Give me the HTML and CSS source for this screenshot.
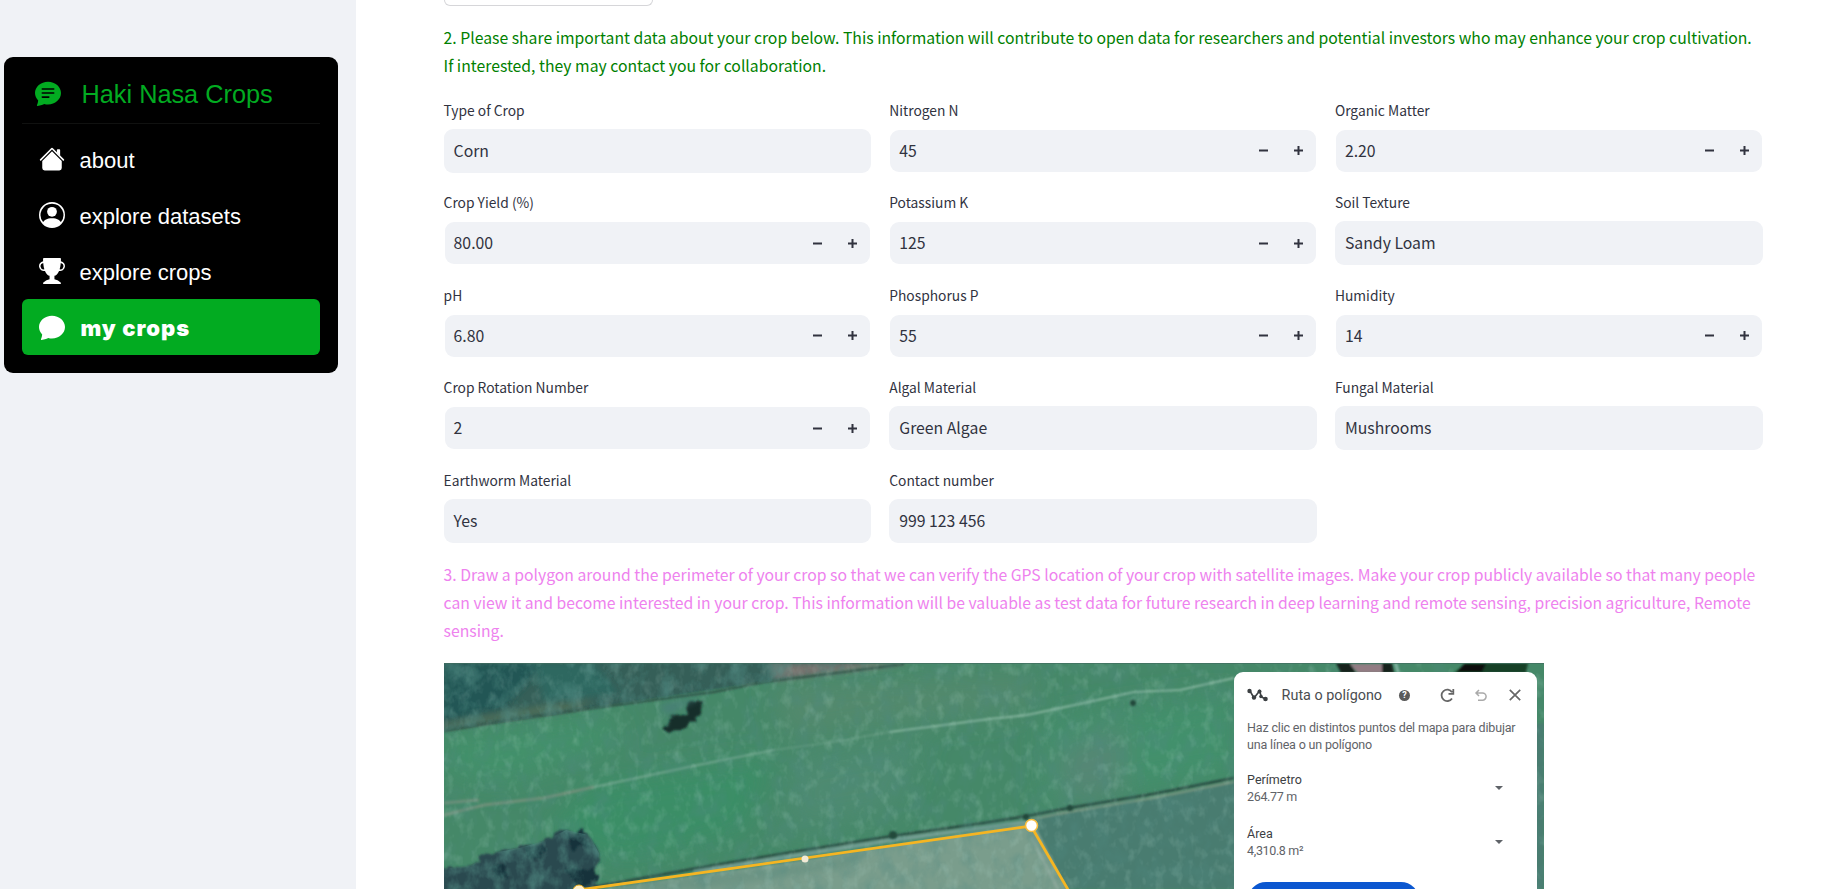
FILE: index.html
```html
<!DOCTYPE html>
<html lang="en">
<head>
<meta charset="utf-8">
<title>Haki Nasa Crops</title>
<link rel="stylesheet" href="styles.css">
</head>
<body>
<svg class="defs" width="0" height="0">
  <symbol id="minus" viewBox="0 0 9 9"><path d="M0 3.5h9v2H0z"/></symbol>
  <symbol id="plus" viewBox="0 0 9 9"><path d="M0 3.5h3.5V0h2v3.5H9v2H5.5V9h-2V5.5H0z"/></symbol>
</svg>
<div class="app">
  <aside class="sidebar">
    <nav class="menu">
      <div class="menu-title">
        <svg class="icon" viewBox="0 0 16 16"><path d="M16 8c0 3.866-3.582 7-8 7a9.06 9.06 0 0 1-2.347-.306c-.584.296-1.925.864-4.181 1.234-.2.032-.352-.176-.273-.362.354-.836.674-1.95.77-2.966C.744 11.37 0 9.76 0 8c0-3.866 3.582-7 8-7s8 3.134 8 7zM4.5 5a.5.5 0 0 0 0 1h7a.5.5 0 0 0 0-1h-7zm0 2.5a.5.5 0 0 0 0 1h7a.5.5 0 0 0 0-1h-7zm0 2.5a.5.5 0 0 0 0 1h4a.5.5 0 0 0 0-1h-4z"/></svg>
        <span>Haki Nasa Crops</span>
      </div>
      <a class="menu-item">
        <svg class="icon" viewBox="0 0 16 16"><path d="M8 3.293l6 6V13.5a1.5 1.5 0 0 1-1.5 1.5h-9A1.5 1.5 0 0 1 2 13.5V9.293l6-6zm5-.793V6l-2-2V2.5a.5.5 0 0 1 .5-.5h1a.5.5 0 0 1 .5.5z"/><path d="M7.293 1.5a1 1 0 0 1 1.414 0l6.647 6.646a.5.5 0 0 1-.708.708L8 2.207 1.354 8.854a.5.5 0 1 1-.708-.708L7.293 1.5z"/></svg>
        <span>about</span>
      </a>
      <a class="menu-item">
        <svg class="icon" viewBox="0 0 16 16"><path d="M11 6a3 3 0 1 1-6 0 3 3 0 0 1 6 0z"/><path fill-rule="evenodd" d="M0 8a8 8 0 1 1 16 0A8 8 0 0 1 0 8zm8-7a7 7 0 0 0-5.468 11.37C3.242 11.226 4.805 10 8 10s4.757 1.225 5.468 2.37A7 7 0 0 0 8 1z"/></svg>
        <span>explore datasets</span>
      </a>
      <a class="menu-item">
        <svg class="icon" viewBox="0 0 16 16"><path d="M2.5.5A.5.5 0 0 1 3 0h10a.5.5 0 0 1 .5.5c0 .538-.012 1.05-.034 1.536a3 3 0 1 1-1.133 5.89c-.79 1.865-1.878 2.777-2.833 3.011v2.173l1.425.356c.194.048.377.135.537.255L13.3 15.1a.5.5 0 0 1-.3.9H3a.5.5 0 0 1-.3-.9l1.838-1.379c.16-.12.343-.207.537-.255L6.5 13.11v-2.173c-.955-.234-2.043-1.146-2.833-3.012a3 3 0 1 1-1.132-5.89A33.076 33.076 0 0 1 2.5.5zm.099 2.54a2 2 0 0 0 .72 3.935c-.333-1.05-.588-2.346-.72-3.935zm10.083 3.935a2 2 0 0 0 .72-3.935c-.133 1.59-.388 2.885-.72 3.935z"/></svg>
        <span>explore crops</span>
      </a>
      <a class="menu-item active">
        <svg class="icon" viewBox="0 0 16 16"><path d="M8 15c4.418 0 8-3.134 8-7s-3.582-7-8-7-8 3.134-8 7c0 1.76.743 3.37 1.97 4.6-.097 1.016-.417 2.13-.771 2.966-.079.186.074.394.273.362 2.256-.37 3.597-.938 4.18-1.234A9.06 9.06 0 0 0 8 15z"/></svg>
        <span>my crops</span>
      </a>
    </nav>
  </aside>
  <main class="content">
    <div class="upper-button"></div>
    <p class="step step-data">2. Please share important data about your crop below. This information will contribute to open data for researchers and potential investors who may enhance your crop cultivation.<br>If interested, they may contact you for collaboration.</p>
    <form class="fields">
      <div class="field"><label>Type of Crop</label><div class="input tall">Corn</div></div>
      <div class="field"><label>Nitrogen N</label><div class="input number"><span>45</span><svg><use href="#minus"/></svg><svg><use href="#plus"/></svg></div></div>
      <div class="field"><label>Organic Matter</label><div class="input number"><span>2.20</span><svg><use href="#minus"/></svg><svg><use href="#plus"/></svg></div></div>
      <div class="field"><label>Crop Yield (%)</label><div class="input number"><span>80.00</span><svg><use href="#minus"/></svg><svg><use href="#plus"/></svg></div></div>
      <div class="field"><label>Potassium K</label><div class="input number"><span>125</span><svg><use href="#minus"/></svg><svg><use href="#plus"/></svg></div></div>
      <div class="field"><label>Soil Texture</label><div class="input">Sandy Loam</div></div>
      <div class="field"><label>pH</label><div class="input number"><span>6.80</span><svg><use href="#minus"/></svg><svg><use href="#plus"/></svg></div></div>
      <div class="field"><label>Phosphorus P</label><div class="input number"><span>55</span><svg><use href="#minus"/></svg><svg><use href="#plus"/></svg></div></div>
      <div class="field"><label>Humidity</label><div class="input number"><span>14</span><svg><use href="#minus"/></svg><svg><use href="#plus"/></svg></div></div>
      <div class="field"><label>Crop Rotation Number</label><div class="input number"><span>2</span><svg><use href="#minus"/></svg><svg><use href="#plus"/></svg></div></div>
      <div class="field"><label>Algal Material</label><div class="input">Green Algae</div></div>
      <div class="field"><label>Fungal Material</label><div class="input">Mushrooms</div></div>
      <div class="field"><label>Earthworm Material</label><div class="input">Yes</div></div>
      <div class="field"><label>Contact number</label><div class="input">999 123 456</div></div>
    </form>
    <p class="step step-map">3. Draw a polygon around the perimeter of your crop so that we can verify the GPS location of your crop with satellite images. Make your crop publicly available so that many people<br>can view it and become interested in your crop. This information will be valuable as test data for future research in deep learning and remote sensing, precision agriculture, Remote<br>sensing.</p>
    <div class="map">
      <svg class="terrain" viewBox="0 0 1100 226">
        <defs>
          <filter id="b1" x="-20%" y="-20%" width="140%" height="140%"><feGaussianBlur stdDeviation="1"/></filter>
          <filter id="b3" x="-30%" y="-30%" width="160%" height="160%"><feGaussianBlur stdDeviation="3"/></filter>
          <filter id="b14" x="-50%" y="-50%" width="200%" height="200%"><feGaussianBlur stdDeviation="14"/></filter>
          <filter id="rough" x="-20%" y="-20%" width="140%" height="140%"><feTurbulence type="fractalNoise" baseFrequency=".09" numOctaves="2" seed="4"/><feDisplacementMap in="SourceGraphic" scale="10"/><feGaussianBlur stdDeviation="1.3"/></filter>
          <filter id="dark" x="0" y="0" width="100%" height="100%"><feTurbulence type="fractalNoise" baseFrequency=".06 .045" numOctaves="4" seed="8"/><feColorMatrix values="0 0 0 0 .08  0 0 0 0 .25  0 0 0 0 .22  1.9 0 0 0 -.8"/></filter>
          <filter id="light" x="0" y="0" width="100%" height="100%"><feTurbulence type="fractalNoise" baseFrequency=".1 .07" numOctaves="3" seed="21"/><feColorMatrix values="0 0 0 0 .5  0 0 0 0 .75  0 0 0 0 .67  0 1.9 0 0 -.95"/><feGaussianBlur stdDeviation=".7"/></filter>
          <clipPath id="woods"><path d="M0 0H430L319 20 150 46 0 68z"/></clipPath>
          <clipPath id="trees"><path d="M0 206L28 202 48 190 75 185 100 178 122 167 145 172 155 190 153 226H0z"/></clipPath>
        </defs>
        <path fill="#458868" d="M0 0h1100v226H0z"/>
        <g filter="url(#b14)">
          <path fill="#3a8e66" d="M150 120L330 95 300 170 180 200 100 170z"/>
          <path fill="#43916a" d="M0 75L160 55 180 80 60 120 0 110z"/>
          <path fill="#53896d" d="M330 20L590 10V45L340 75z"/>
          <path fill="#4d8a71" d="M350 95L480 75 450 150 340 170z"/>
          <path fill="#43906c" d="M600 60L790 30V110L600 140z"/>
          <path fill="#558775" d="M610 90L680 60 680 130 620 140z"/>
        </g>
        <path fill="#365e58" filter="url(#b1)" d="M-5 -5H450L319 19 150 45 70 57-5 68z"/>
        <g filter="url(#b3)">
          <path fill="#205654" d="M0 0H100L60 45 0 58z"/>
          <path fill="#2e6861" d="M90 0H150L175 30 100 40z"/>
          <path fill="#787570" d="M325 0H470L380 11 330 17z"/>
          <path fill="#4e6d59" d="M100 42L150 37 130 47 0 66V60z"/>
        </g>
        <path fill="none" stroke="#2e5146" stroke-width="2" filter="url(#b1)" d="M0 68L60 58 150 45 270 29 320 19 400 9 460 1"/>
        <path fill="#4a7c70" filter="url(#b1)" d="M583 157L625 148 709 135 790 118 1100 60V226H625z"/>
        <g fill="none" filter="url(#b1)">
          <path stroke="#70a58c" stroke-width="1.8" d="M150 124L254 102 330 87"/>
          <path stroke="#6da188" stroke-width="1.2" d="M330 87L390 79 445 69"/>
          <path stroke="#83b39c" stroke-width="2" d="M445 69L500 62 545 56 583 52 640 40 690 29 736 27 790 15"/>
          <path stroke="#6e9079" stroke-width="3" d="M0 152L40 142 100 135 150 124M0 140L35 137"/>
        </g>
        <path fill="#7a9d8c" filter="url(#b1)" d="M135 230L361 197 583 160 592 164 625 230z"/>
        <path fill="#6d9484" filter="url(#b3)" d="M140 228L361 200 430 188 400 205 260 226z"/>
        <g fill="none" filter="url(#b1)">
          <path stroke="#749e93" stroke-width="4" d="M250 209L349 193 449 177 583 159"/>
          <path stroke="#28493f" stroke-width="2.6" d="M150 224L254 205 349 189 449 173 540 160 583 153 625 145 709 131 790 115"/>
          <path stroke="#7c9680" stroke-width="2" d="M583 157L625 149 709 135 790 119"/>
          <path stroke="#8aa79a" stroke-width="3" d="M587 174L614 226"/>
        </g>
        <rect width="1100" height="226" filter="url(#dark)" opacity=".42"/>
        <rect width="1100" height="226" filter="url(#light)" opacity=".26"/>
        <g clip-path="url(#woods)"><rect width="460" height="70" filter="url(#dark)" opacity=".6"/></g>
        <g filter="url(#rough)">
          <path fill="#2b494f" d="M-9 206L28 202 48 190 75 185 100 178 122 167 145 172 155 190 153 236H-9z"/>
          <path fill="#14313b" d="M122 172l18-6 4 16-16 6zM45 200l16 2 5 16-16-4zM83 185l18-2-4 14-14-2zM120 206l34 2v12l-20 3z"/>
          <path fill="#122d2b" d="M218 66L227 55 240 50 244 41 260 39 252 59 238 65 226 71z"/>
        </g>
        <g clip-path="url(#trees)"><rect y="150" width="170" height="80" filter="url(#dark)"/></g>
        <path fill="#4a7b7d" opacity=".6" filter="url(#b3)" d="M215 42L262 32 242 42 225 52z"/>
        <g fill="#24483b" filter="url(#b1)"><circle cx="449" cy="172" r="4"/><circle cx="689" cy="40" r="3"/><circle cx="626" cy="145" r="3"/><circle cx="582" cy="154" r="3"/></g>
        <g filter="url(#b1)">
          <path fill="#14221f" d="M892 0h14l6 10h-15zM938 0h10l2 10h-12z"/>
          <path fill="#927b83" d="M906 1h32v9h-24z"/>
          <path fill="#173f25" d="M1022 0h62l-2 10h-72z"/>
          <path fill="#090f0c" d="M1020 1h22l-4 8h-25z"/>
          <path fill="#83b5a3" d="M950 0h3l3 10h-3z"/>
        </g>
        <path fill="none" stroke="#f5b522" stroke-width="2.8" d="M135 227L587 163 626 230"/>
        <circle cx="361" cy="196" r="3.5" fill="#f2ead6"/>
        <circle cx="135" cy="228" r="6" fill="#fff1cd" stroke="#f5b522"/>
        <circle cx="587.5" cy="162.5" r="6" fill="#fff" stroke="#f6bc3e" stroke-width="1.6"/>
        <path d="M0 .5h1100" stroke="#416d60" opacity=".7"/>
      </svg>
      <section class="panel">
        <header class="panel-head">
          <svg class="route" viewBox="0 0 21 14"><path d="M3 3l4 7 5.500-7 2 6 4 2" fill="none" stroke="#3c4043" stroke-width="1.6"/><g fill="#3c4043"><circle cx="2.500" cy="3" r="2.200"/><circle cx="7" cy="9.500" r="2.200"/><circle cx="12.500" cy="3.500" r="2"/><circle cx="14" cy="8.500" r="1.800"/><circle cx="18.500" cy="11" r="2.300"/></g></svg>
          <h2>Ruta o polígono</h2>
          <span class="help">?</span>
          <svg class="redo" viewBox="0 0 15 15"><path d="M12 10.5A5.7 5.7 0 1 1 12 4.2M13.3 1v4.8H8.5" fill="none" stroke="#666" stroke-width="1.8"/></svg>
          <svg class="undo" viewBox="0 0 15 15"><path d="M5 2L2 5l3 3M2 5h6.500a3.600 3.600 0 0 1 0 7.200H4" fill="none" stroke="#aaa" stroke-width="1.5"/></svg>
          <svg class="close" viewBox="0 0 12 12"><path d="M.8.8l10.400 10.400M11.200.8L.8 11.200" stroke="#666" stroke-width="1.7"/></svg>
        </header>
        <p class="hint">Haz clic en distintos puntos del mapa para dibujar<br>una línea o un polígono</p>
        <div class="measure"><div><b>Perímetro</b><span>264.77 m</span></div><i></i></div>
        <div class="measure"><div><b>Área</b><span>4,310.8 m²</span></div><i></i></div>
        <div class="panel-button"></div>
      </section>
    </div>
  </main>
</div>
</body>
</html>
```
FILE: styles.css
```css
* { box-sizing: border-box; }
body {
  margin: 0;
  height: 889px;
  overflow: hidden;
  background: #fff;
  color: #31333f;
  font-family: "Noto Sans CJK SC", "Noto Sans", sans-serif;
}
.defs { display: block; height: 0; }
.app { display: flex; height: 889px; }

.sidebar {
  flex: none;
  width: 356px;
  padding: 57px 0 0 4px;
  background: #f0f2f6;
}
.menu {
  width: 334px;
  height: 316px;
  padding: 18px;
  border-radius: 9px;
  background: #000;
  color: #fff;
  font-family: "Liberation Sans", Arial, sans-serif;
}
.menu-title {
  display: flex;
  align-items: center;
  gap: 20.5px;
  height: 49px;
  margin-bottom: 7px;
  padding: 0 0 11px 13px;
  border-bottom: 1px solid #101110;
  color: #02ab21;
  font-size: 25.3px;
}
.menu-title span { padding-top: 2px; }
.menu-title .icon { margin-bottom: 1px; }
.icon { flex: none; width: 26px; height: 26px; fill: currentColor; }
.menu-item {
  display: flex;
  align-items: center;
  gap: 14.500px;
  height: 56px;
  padding: 0 17px;
  border-radius: 6px;
  font-size: 22px;
}
.menu-item span { padding-top: 4px; }
.menu-item .icon { margin-bottom: 1px; }
.menu-item.active { background: #02ab21; }
.menu-item.active span {
  padding: 2px 0 0 1px;
  font-family: Inter, "Liberation Sans", sans-serif;
  font-weight: 900;
  letter-spacing: 1px;
}

.content { width: 1319px; margin-left: 87.6px; }
.upper-button {
  width: 209px;
  height: 6px;
  border: 1px solid #d6d6d9;
  border-top: 0;
  border-radius: 0 0 9px 9px;
}
.step {
  margin: 0;
  font-size: 15.76px;
  line-height: 28px;
  white-space: nowrap;
}
.step-data { padding-top: 18px; color: #008000; }
.fields {
  display: grid;
  grid-template-columns: repeat(3, 1fr);
  grid-auto-rows: 75px;
  gap: 17.66px 18px;
  padding-top: 17.500px;
}
.field label {
  display: block;
  height: 31px;
  font-size: 13.8px;
  line-height: 24px;
}
.input {
  display: flex;
  align-items: center;
  height: 44px;
  padding: 0 10px 1px;
  border-radius: 9px;
  background: #f0f2f6;
  font-size: 15.8px;
}
.number {
  height: 42px;
  margin: 1px;
  padding: 0 13px 0 9px;
  gap: 26px;
}
.number span { flex: 1; padding-bottom: 1px; }
.number svg { width: 9px; height: 9px; fill: #31333f; }
.step-map { padding-top: 17.500px; color: #ee82ee; }

.map { position: relative; width: 1100px; height: 226px; margin-top: 18px; }
.terrain { display: block; width: 1100px; height: 226px; }
.panel {
  position: absolute;
  top: 9px;
  left: 790px;
  width: 303px;
  height: 217px;
  padding: 0 13.500px;
  overflow: hidden;
  border-radius: 9px 9px 0 0;
  background: #fff;
  color: #5f6368;
  font-family: Roboto, sans-serif;
  font-size: 12.5px;
  line-height: 17px;
}
.panel-head { display: flex; align-items: center; height: 47px; }
.panel-head svg { flex: none; }
.route { width: 21px; height: 14px; }
.panel h2 { width: 100px; margin: 0 0 0 13.500px; color: #4a4d50; font-size: 14.400px; font-weight: 400; white-space: nowrap; }
.help {
  width: 11px;
  height: 11px;
  margin-left: 17.500px;
  border-radius: 50%;
  background: #5a5a5a;
  color: #fff;
  font-size: 9px;
  font-weight: 700;
  line-height: 11px;
  text-align: center;
}
.redo { width: 15px; height: 15px; margin-left: 30px; }
.undo { width: 15px; height: 15px; margin-left: 19px; }
.close { width: 12px; height: 12px; margin-left: 20px; }
.hint { height: 52px; margin: 0; letter-spacing: -.17px; white-space: nowrap; }
.measure { display: flex; height: 54.500px; justify-content: space-between; padding-right: 20px; }
.measure div { display: flex; flex-direction: column; }
.measure span { letter-spacing: -.35px; }
.measure b { color: #3c4043; font-weight: 400; }
.measure i { width: 0; height: 0; margin-top: 15px; border: 4px solid transparent; border-top-color: #5f6368; }
.panel-button { width: 171px; height: 36px; margin: 2px 0 0 1px; border-radius: 18px; background: #0b57d0; }
```
